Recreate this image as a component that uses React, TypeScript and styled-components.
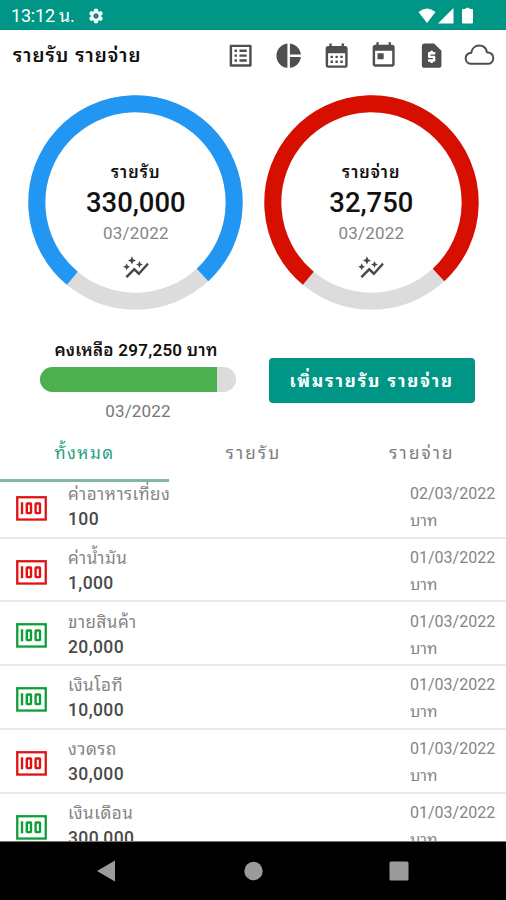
import React from "react";
import styled, { createGlobalStyle } from "styled-components";
import {
  MdOutlineListAlt,
  MdPieChart,
  MdCalendarMonth,
  MdToday,
  MdRequestPage,
  MdAutoGraph,
  MdSettings,
} from "react-icons/md";

const Global = createGlobalStyle`
  * { box-sizing: border-box; }
  body { margin: 0; background: #fff; }
`;

const Screen = styled.div`
  width: 506px;
  height: 900px;
  display: flex;
  flex-direction: column;
  overflow: hidden;
  background: #fff;
  font-family: Roboto, "Noto Sans Thai Looped", "Noto Looped Thai", Loma, Waree, Garuda, Umpush, "Noto Sans Thai", "Noto Sans", sans-serif;
`;

const StatusBar = styled.header`
  height: 30px;
  flex: none;
  display: flex;
  align-items: center;
  padding: 2px 32px 0 11px;
  background: #009686;
  color: #fff;
`;

const Label = styled.span<{
  $size: number;
  $line: number;
  $color?: string;
  $weight?: number;
  $spacing?: number;
}>`
  display: block;
  white-space: nowrap;
  font-size: ${(p) => p.$size}px;
  line-height: ${(p) => p.$line}px;
  color: ${(p) => p.$color ?? "#111"};
  font-weight: ${(p) => p.$weight ?? 400};
  letter-spacing: ${(p) => p.$spacing ?? 0}px;
`;

const StatusGear = styled(MdSettings)`
  width: 18px;
  height: 18px;
  margin: -1px 0 0 12px;
`;

const StatusIcons = styled.svg`
  width: 56px;
  height: 18px;
  margin-left: auto;
  margin-top: -1px;
`;

const Toolbar = styled.div`
  height: 52px;
  flex: none;
  display: flex;
  align-items: center;
  justify-content: space-between;
  padding: 0 11px 0 13px;
`;

const Actions = styled.nav`
  display: flex;
  align-items: center;
  gap: 18.5px;
  color: #4f4f4f;
  svg { width: 29.3px; height: 29.3px; display: block; }
  svg:last-child { width: 31px; height: 31px; margin: -2px 0 0 -1px; }
`;

const Gauges = styled.section`
  height: 238px;
  flex: none;
  display: grid;
  grid-template-columns: 215px 215px;
  column-gap: 20.5px;
  padding: 12.5px 0 0 28.3px;
`;

const Gauge = styled.div`
  display: grid;
  height: 215px;
  > * { grid-area: 1 / 1; }
`;

const GaugeText = styled.div`
  display: flex;
  flex-direction: column;
  align-items: center;
  padding-top: 66px;
  svg { width: 28px; height: 28px; margin-top: 9px; color: #484848; }
`;

const Summary = styled.section`
  height: 107px;
  flex: none;
  display: flex;
  justify-content: space-between;
  padding: 20px 31px 0 40px;
`;

const Balance = styled.div`
  width: 196px;
  display: flex;
  flex-direction: column;
  align-items: center;
`;

const BalanceTitle = styled(Label)`
  margin-right: 4px;
`;

const Track = styled.div`
  width: 196px;
  height: 25px;
  margin: 7px 0 8px;
  border-radius: 13px;
  overflow: hidden;
  background: #dcdcdc;
`;

const Fill = styled.div`
  width: 177px;
  height: 100%;
  background: #4caf50;
`;

const AddButton = styled.button`
  width: 206.5px;
  height: 45px;
  margin-top: 18px;
  padding: 0;
  border: 0;
  border-radius: 4px;
  display: flex;
  align-items: center;
  justify-content: center;
  background: #009686;
  font-family: inherit;
`;

const Tabs = styled.div`
  height: 55px;
  flex: none;
  display: grid;
  grid-template-columns: 169px 169px 168px;
`;

const Tab = styled.div<{ $active?: boolean }>`
  display: flex;
  justify-content: center;
  padding-top: 13px;
  border-bottom: 3px solid ${(p) => (p.$active ? "#82b5a2" : "transparent")};
`;

const List = styled.main`
  height: 360px;
  flex: none;
  overflow: hidden;
  border-bottom: 1px solid #777;
`;

const Row = styled.article`
  height: 63.75px;
  display: grid;
  grid-template-columns: 68px 342px 1fr;
  border-bottom: 2px solid #e8e8e8;
  &:first-child { height: 56.5px; }
  &:first-child > * { margin-top: -7.25px; }
`;

const Note = styled.div<{ $income: boolean }>`
  padding: 21px 0 0 15.8px;
  color: ${(p) => (p.$income ? "#0d9f3c" : "#e01212")};
  svg { display: block; }
`;

const Cell = styled.div`
  padding-top: 7.3px;
`;

const NavBar = styled.footer`
  height: 58px;
  flex: none;
  background: #000;
  svg { display: block; }
`;

const LEFT = (39.8 * Math.PI) / 180;
const RIGHT = (42.8 * Math.PI) / 180;
const R = 98.7;
const C = 107.5;

function GaugeDial({ title, value, color }: { title: string; value: string; color: string }) {
  const x1 = C - R * Math.sin(LEFT);
  const y1 = C + R * Math.cos(LEFT);
  const x2 = C + R * Math.sin(RIGHT);
  const y2 = C + R * Math.cos(RIGHT);
  return (
    <Gauge>
      <svg width="215" height="215" fill="none" strokeWidth="17">
        <circle cx={C} cy={C} r={R} stroke="#dcdcdc" />
        <path d={`M${x1} ${y1}A${R} ${R} 0 1 1 ${x2} ${y2}`} stroke={color} />
      </svg>
      <GaugeText>
        <Label $size={16.5} $line={24} $weight={600} $spacing={1}>{title}</Label>
        <Label $size={27.4} $line={37} $weight={500}>{value}</Label>
        <Label $size={17} $line={23} $color="#858585" $spacing={0.2}>03/2022</Label>
        <MdAutoGraph />
      </GaugeText>
    </Gauge>
  );
}

function Banknote() {
  return (
    <svg width="31" height="25" fill="none" stroke="currentColor">
      <rect x="1.25" y="1.25" width="28.5" height="22.3" strokeWidth="2.3" />
      <g strokeWidth="2.4">
        <path d="M6 6.3V18.3" />
        <rect x="10.8" y="7.5" width="4.2" height="9.6" rx=".6" />
        <rect x="19.6" y="7.5" width="4.4" height="9.6" rx=".6" />
      </g>
    </svg>
  );
}

const rows = [
  { name: "ค่าอาหารเที่ยง", amount: "100", date: "02/03/2022", income: false },
  { name: "ค่าน้ำมัน", amount: "1,000", date: "01/03/2022", income: false },
  { name: "ขายสินค้า", amount: "20,000", date: "01/03/2022", income: true },
  { name: "เงินโอที", amount: "10,000", date: "01/03/2022", income: true },
  { name: "งวดรถ", amount: "30,000", date: "01/03/2022", income: false },
  { name: "เงินเดือน", amount: "300,000", date: "01/03/2022", income: true },
];

export default function App() {
  return (
    <>
      <Global />
      <Screen>
        <StatusBar>
          <Label $size={18} $line={24} $color="#fff" $spacing={-0.2}>13:12 น.</Label>
          <StatusGear />
          <StatusIcons viewBox="0 0 56 18" fill="#fff">
            <path d="M.5 5Q9 -2 17.5 5L9 16Z" />
            <path d="M35.500 1V16.500H20Z" />
            <path d="M45 2h2Q49.500 -1 52 2h2q1 0 1 1v12.500q0 1-1 1h-9q-1 0-1-1V3q0-1 1-1Z" />
          </StatusIcons>
        </StatusBar>
        <Toolbar>
          <Label $size={19} $line={30} $weight={600} $spacing={1}>รายรับ รายจ่าย</Label>
          <Actions>
            <MdOutlineListAlt />
            <MdPieChart />
            <MdCalendarMonth />
            <MdToday />
            <MdRequestPage />
            <svg viewBox="0 0 31 31" fill="none" stroke="currentColor" strokeWidth="2">
              <path d="M7.500 24.800C4 24.800 1.700 22.300 1.700 19.400C1.700 16.600 3.800 14.300 7.200 13.800C8 9.400 11.300 6.600 15.200 6.600C19.200 6.600 22.100 9.300 23 13.200C26.800 13.600 29.300 15.900 29.300 19.100C29.300 22.400 26.900 24.800 23.700 24.800Z" />
            </svg>
          </Actions>
        </Toolbar>
        <Gauges>
          <GaugeDial title="รายรับ" value="330,000" color="#2196f3" />
          <GaugeDial title="รายจ่าย" value="32,750" color="#d60f00" />
        </Gauges>
        <Summary>
          <Balance>
            <BalanceTitle $size={17} $line={20} $weight={600} $spacing={0.25}>คงเหลือ 297,250 บาท</BalanceTitle>
            <Track><Fill /></Track>
            <Label $size={17} $line={22} $color="#777" $spacing={0.2}>03/2022</Label>
          </Balance>
          <AddButton>
            <Label $size={17} $line={24} $weight={700} $color="#fff" $spacing={1.9}>เพิ่มรายรับ รายจ่าย</Label>
          </AddButton>
        </Summary>
        <Tabs>
          <Tab $active><Label $size={17} $line={26} $color="#2a9d85" $spacing={1.4}>ทั้งหมด</Label></Tab>
          <Tab><Label $size={17} $line={26} $color="#7b7b7b" $spacing={2.2}>รายรับ</Label></Tab>
          <Tab><Label $size={17} $line={26} $color="#7b7b7b" $spacing={2.2}>รายจ่าย</Label></Tab>
        </Tabs>
        <List>
          {rows.map((r) => (
            <Row key={r.name}>
              <Note $income={r.income}><Banknote /></Note>
              <Cell>
                <Label $size={17} $line={24} $color="#858585" $spacing={0.5}>{r.name}</Label>
                <Label $size={17.5} $line={26} $color="#4a4a4a" $weight={500} $spacing={0.4}>{r.amount}</Label>
              </Cell>
              <Cell>
                <Label $size={16} $line={24} $color="#858585">{r.date}</Label>
                <Label $size={16} $line={29} $color="#858585">บาท</Label>
              </Cell>
            </Row>
          ))}
        </List>
        <NavBar>
          <svg width="506" height="58" fill="#9b9b9b">
            <path d="M97 29L115 18.5V39.5Z" />
            <circle cx="253.5" cy="29" r="9.2" />
            <rect x="389.5" y="19.5" width="19" height="19" rx="1.5" />
          </svg>
        </NavBar>
      </Screen>
    </>
  );
}
